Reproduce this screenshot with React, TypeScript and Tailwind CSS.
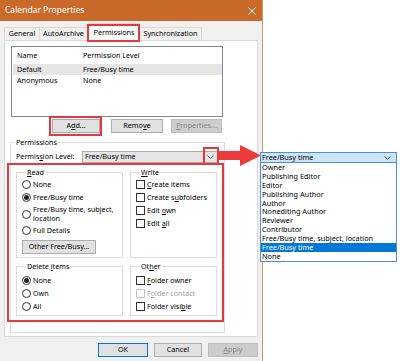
import React from 'react';

const U = ({ children }: { children: React.ReactNode }) => (
  <span className="underline underline-offset-[1px] decoration-[0.5px]">{children}</span>
);

const Frame = ({ className }: { className: string }) => (
  <span className={`pointer-events-none absolute border-2 border-[#e8383d] ${className}`} />
);

const Radio = ({ checked, children, className }: { checked?: boolean; children: React.ReactNode; className: string }) => (
  <div className={`flex items-center ${className}`}>
    <span className="w-[9px] h-[9px] shrink-0 rounded-full border border-[#333] bg-white flex items-center justify-center">
      {checked && <span className="w-[5px] h-[5px] rounded-full bg-[#222]" />}
    </span>
    <span className="ml-[2px]">{children}</span>
  </div>
);

const Check = ({ disabled, children }: { disabled?: boolean; children: React.ReactNode }) => (
  <div className="flex items-center h-[13px]">
    <span
      className={
        disabled
          ? 'w-[9px] h-[9px] shrink-0 border border-[#c4c4c4] bg-white'
          : 'w-[9px] h-[9px] shrink-0 border border-[#333] bg-white'
      }
    />
    <span className={disabled ? 'ml-[2px] text-[#a0a0a0]' : 'ml-[2px]'}>{children}</span>
  </div>
);

const Btn = ({ className, children }: { className: string; children: React.ReactNode }) => (
  <div className={`relative h-[14px] flex items-center justify-center border ${className}`}>{children}</div>
);

const Chevron = () => (
  <svg width="7" height="4" viewBox="0 0 7 4">
    <path d="M0.5 0.5L3.5 3.5L6.5 0.5" stroke="#444" strokeWidth="0.9" fill="none" />
  </svg>
);

const Group = ({ title, className, children }: { title: React.ReactNode; className: string; children: React.ReactNode }) => (
  <fieldset className={`border border-[#dcdcdc] ${className}`}>
    <legend className="ml-[4px] px-[1px] leading-[10px]">{title}</legend>
    {children}
  </fieldset>
);

const levels = [
  'Owner',
  'Publishing Editor',
  'Editor',
  'Publishing Author',
  'Author',
  'Nonediting Author',
  'Reviewer',
  'Contributor',
  'Free/Busy time, subject, location',
  'Free/Busy time',
  'None',
];

const App = () => {
  return (
    <div className="relative flex w-[400px] h-[361px] overflow-hidden bg-white font-['Noto_Sans',sans-serif] text-[7.2px] leading-none text-black">
      {/* Dialog */}
      <div className="w-[263px] h-[361px] shrink-0 flex flex-col bg-[#f0f0f0] border-r border-[#d09a70]">
        <div className="h-[21px] shrink-0 flex items-center justify-between pl-[5px] pr-[6px] bg-[#c96a2b] text-white text-[8.5px]">
          <span>Calendar Properties</span>
          <svg width="8" height="8" viewBox="0 0 8 8">
            <path d="M0.5 0.5L7.5 7.5M7.5 0.5L0.5 7.5" stroke="white" strokeWidth="1" />
          </svg>
        </div>

        {/* Tabs */}
        <div className="ml-[4px] mt-[2px] h-[17px] flex items-end">
          <div className="w-[36px] h-[13px] flex items-center justify-center border border-b-0 border-[#d9d9d9]">General</div>
          <div className="w-[48px] h-[13px] flex items-center justify-center border border-b-0 border-l-0 border-[#d9d9d9]">AutoArchive</div>
          <div className="relative z-10 w-[52px] h-[18px] -mb-[1px] flex items-center justify-center bg-white border border-b-0 border-[#d9d9d9]">
            Permissions
            <Frame className="-left-[2px] -right-[1px] top-0 -bottom-[1px]" />
          </div>
          <div className="w-[62px] h-[13px] flex items-center justify-center border border-b-0 border-l-0 border-[#d9d9d9]">Synchronization</div>
        </div>

        {/* Tab panel */}
        <div className="ml-[4px] w-[254px] h-[297px] shrink-0 flex flex-col pl-[6px] pt-[5px] bg-white border border-[#d9d9d9]">
          <div className="w-[212px] h-[71px] shrink-0 px-[1px] border border-[#828790]">
            <div className="h-[17px] flex items-center">
              <span className="w-[70px] pl-[4px]">Name</span>
              <span>Permission Level</span>
            </div>
            <div className="w-[209px] h-[11px] flex items-center bg-[#e5e5e5]">
              <span className="w-[70px] pl-[4px]">Default</span>
              <span>Free/Busy time</span>
            </div>
            <div className="h-[11px] flex items-center">
              <span className="w-[70px] pl-[4px]">Anonymous</span>
              <span>None</span>
            </div>
          </div>

          <div className="mt-[2px] flex">
            <Btn className="ml-[41px] w-[48px] bg-[#e1e1e1] border-[#adadad]">
              A<U>d</U>d...
              <Frame className="-left-[4px] -right-[3px] -top-[4px] -bottom-[4px]" />
            </Btn>
            <Btn className="ml-[11px] w-[52px] bg-[#e1e1e1] border-[#adadad]">
              Remo<U>v</U>e
            </Btn>
            <Btn className="ml-[8px] w-[51px] bg-[#cccccc] border-[#bfbfbf] text-[#8a8a8a]">
              <U>P</U>roperties...
            </Btn>
          </div>

          <Group title="Permissions" className="mt-[4px] -ml-[1px] w-[213px] pb-[10px]">
            <div className="mt-[4px] h-[12px] flex items-center">
              <span className="w-[71px] pl-[5px]">
                Permis<U>s</U>ion Level:
              </span>
              <div className="relative w-[136px] h-[12px] flex items-center pl-[2px] bg-[#e5e5e5] border border-[#adadad]">
                <span>Free/Busy time</span>
                <span className="ml-auto w-[13px] h-full flex items-center justify-center">
                  <Chevron />
                </span>
                <Frame className="-right-[2px] -top-[5px] -bottom-[3px] w-[16px]" />
              </div>
            </div>

            <div className="-ml-[4px] w-[217px] pt-[2px] pl-[7px] pr-[5px] pb-[4px] border-2 border-[#e8383d]">
              <div className="flex gap-[7px]">
                <Group title={<><U>R</U>ead</>} className="w-[107px] pl-[5px] pb-[3px]">
                  <div className="pt-[1px]">
                    <Radio className="h-[13px]">None</Radio>
                    <Radio checked className="h-[13px]">Free/Busy time</Radio>
                    <Radio className="h-[20px] leading-[9px]">
                      Free/Busy time, subject,
                      <br />
                      location
                    </Radio>
                    <Radio className="h-[13px]">Full Details</Radio>
                    <Btn className="mt-[3px] w-[74px] bg-[#e1e1e1] border-[#adadad]">Other Free/Busy...</Btn>
                  </div>
                </Group>
                <Group title={<><U>W</U>rite</>} className="w-[87px] pl-[5px]">
                  <div className="pt-[1px]">
                    <Check><U>C</U>reate items</Check>
                    <Check>Create s<U>u</U>bfolders</Check>
                    <Check>Edit <U>o</U>wn</Check>
                    <Check>Edit <U>a</U>ll</Check>
                  </div>
                </Group>
              </div>
              <div className="mt-[3px] flex gap-[7px]">
                <Group title={<>Delete <U>i</U>tems</>} className="w-[107px] pl-[5px] pb-[2px]">
                  <div className="pt-[3px]">
                    <Radio checked className="h-[13px]">None</Radio>
                    <Radio className="h-[13px]">Own</Radio>
                    <Radio className="h-[13px]">All</Radio>
                  </div>
                </Group>
                <Group title={<>Ot<U>h</U>er</>} className="w-[87px] pl-[5px] pb-[2px]">
                  <div className="pt-[3px]">
                    <Check><U>F</U>older owner</Check>
                    <Check disabled>F<U>o</U>lder contact</Check>
                    <Check>Folder visi<U>b</U>le</Check>
                  </div>
                </Group>
              </div>
            </div>
          </Group>
        </div>

        <div className="mt-[6px] pr-[4px] flex justify-end gap-[6px]">
          <Btn className="w-[50px] bg-[#e1e1e1] border-[#0078d7]">OK</Btn>
          <Btn className="w-[48px] bg-[#e1e1e1] border-[#adadad]">Cancel</Btn>
          <Btn className="w-[50px] bg-[#cccccc] border-[#bfbfbf] text-[#8a8a8a]">
            <U>A</U>pply
          </Btn>
        </div>
      </div>

      {/* Expanded dropdown */}
      <div className="relative z-10 -ml-[3px] w-[137px] pt-[152px] text-[7.3px]">
        <div className="h-[11px] flex items-center justify-between pl-[1px] pr-[5px] bg-[#cce4f7] border border-[#4a8fd6]">
          <span>Free/Busy time</span>
          <Chevron />
        </div>
        <div className="bg-white border border-t-0 border-[#4a8fd6]">
          {levels.map((l, i) => (
            <div
              key={l + i}
              className={
                i === 9
                  ? 'h-[8.9px] leading-[8.9px] pl-[1px] overflow-hidden bg-[#0078d7] text-white'
                  : 'h-[8.9px] leading-[8.9px] pl-[1px] overflow-hidden'
              }
            >
              {l}
            </div>
          ))}
        </div>
      </div>

      {/* Red arrow annotation */}
      <svg className="absolute left-[217px] top-[145px]" width="45" height="21" viewBox="0 0 45 21">
        <polygon points="0,6 23,6 23,0 44,10.5 23,21 23,15 0,15" fill="#ec3b3b" />
      </svg>
    </div>
  );
};

export default App;
